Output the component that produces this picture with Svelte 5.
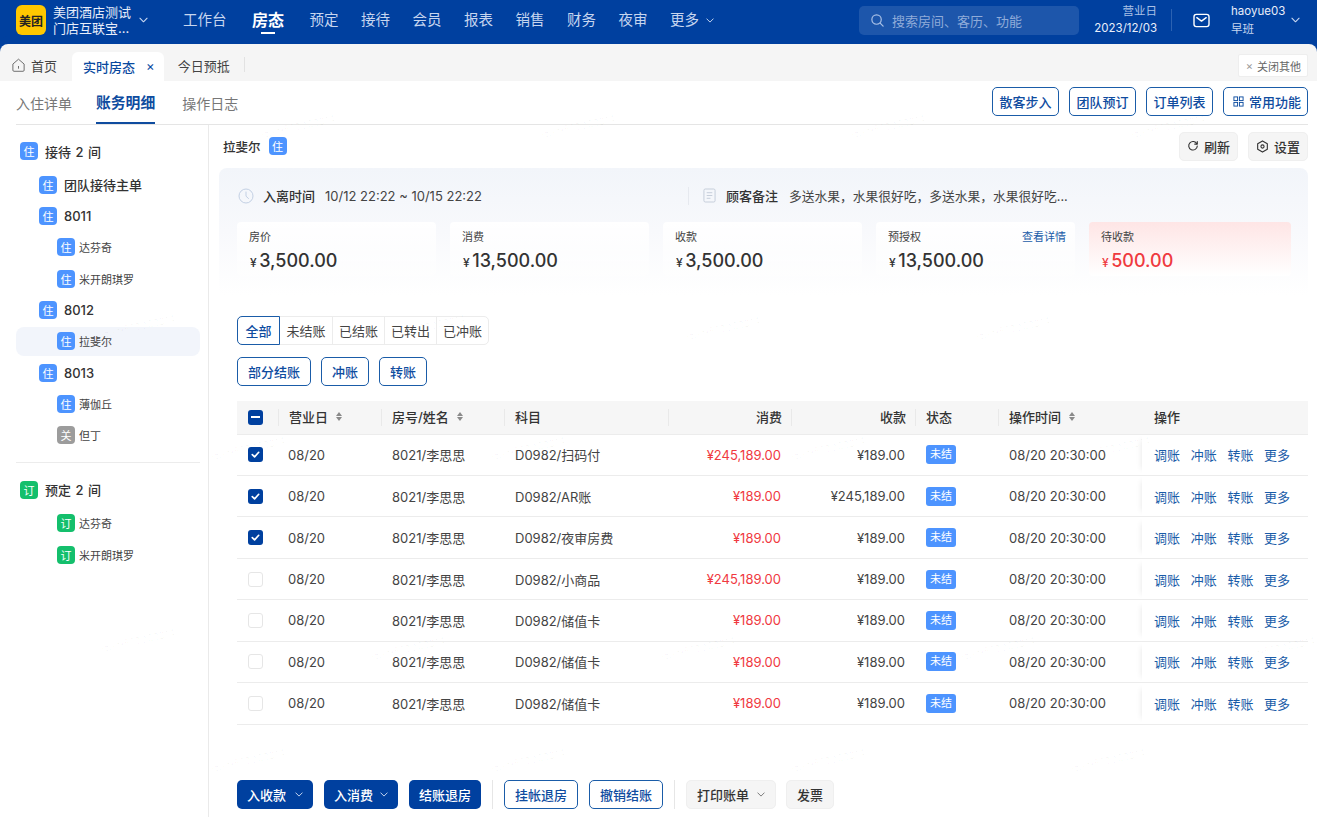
<script>
  const navItems = ["预定", "接待", "会员", "报表", "销售", "财务", "夜审"];

  const tree = [
    { tag: "住", label: "接待 2 间", level: 0, color: "blue", top: true },
    { tag: "住", label: "团队接待主单", level: 1, color: "blue" },
    { tag: "住", label: "8011", level: 1, color: "blue" },
    { tag: "住", label: "达芬奇", level: 2, color: "blue" },
    { tag: "住", label: "米开朗琪罗", level: 2, color: "blue" },
    { tag: "住", label: "8012", level: 1, color: "blue" },
    { tag: "住", label: "拉斐尔", level: 2, color: "blue", active: true },
    { tag: "住", label: "8013", level: 1, color: "blue" },
    { tag: "住", label: "薄伽丘", level: 2, color: "blue" },
    { tag: "关", label: "但丁", level: 2, color: "gray" }
  ];
  const tree2 = [
    { tag: "订", label: "预定 2 间", level: 0, color: "green", top: true },
    { tag: "订", label: "达芬奇", level: 2, color: "green" },
    { tag: "订", label: "米开朗琪罗", level: 2, color: "green" }
  ];

  const cards = [
    { label: "房价", value: "3,500.00" },
    { label: "消费", value: "13,500.00" },
    { label: "收款", value: "3,500.00" },
    { label: "预授权", value: "13,500.00", link: "查看详情" },
    { label: "待收款", value: "500.00", due: true }
  ];

  const filters = ["全部", "未结账", "已结账", "已转出", "已冲账"];

  const rows = [
    { checked: true, item: "扫码付", spend: "¥245,189.00", got: "¥189.00" },
    { checked: true, item: "AR账", spend: "¥189.00", got: "¥245,189.00" },
    { checked: true, item: "夜审房费", spend: "¥189.00", got: "¥189.00" },
    { checked: false, item: "小商品", spend: "¥245,189.00", got: "¥189.00" },
    { checked: false, item: "储值卡", spend: "¥189.00", got: "¥189.00" },
    { checked: false, item: "储值卡", spend: "¥189.00", got: "¥189.00" },
    { checked: false, item: "储值卡", spend: "¥189.00", got: "¥189.00" }
  ];

  // watermark stamps, their place on the page is the content
  const marks = [
    [260, 118], [540, 118], [850, 118], [1130, 118],
    [100, 318], [390, 318], [685, 320], [975, 320],
    [210, 440], [490, 440], [790, 440], [1075, 440],
    [100, 632], [370, 640], [660, 640], [960, 640], [1240, 640],
    [210, 752], [490, 752], [790, 752], [1070, 752]
  ];
</script>

<div class="page">
  <header class="topbar">
    <div class="logo">美团</div>
    <div class="store">
      <div>美团酒店测试</div>
      <div>门店互联宝...</div>
    </div>
    <svg class="chev store-chev" viewBox="0 0 10 6" width="9" height="6"><path d="M1 1l4 4 4-4" /></svg>

    <nav class="nav">
      <span class="nav-item">工作台</span>
      <span class="nav-item current">房态</span>
      {#each navItems as item}
        <span class="nav-item">{item}</span>
      {/each}
      <span class="nav-item">更多
        <svg class="chev" viewBox="0 0 10 6" width="8" height="5"><path d="M1 1l4 4 4-4" /></svg>
      </span>
    </nav>

    <div class="search">
      <svg viewBox="0 0 16 16" width="15" height="15" fill="none" stroke="#a9c0e6" stroke-width="1.3">
        <circle cx="7" cy="7" r="5" /><path d="M10.8 10.8L14 14" stroke-linecap="round" />
      </svg>
      <span>搜索房间、客历、功能</span>
    </div>

    <div class="bizdate">
      <div class="bizdate-label">营业日</div>
      <div>2023/12/03</div>
    </div>
    <div class="top-divider"></div>
    <svg class="mail" viewBox="0 0 18 16" width="17" height="15" fill="none" stroke="#fff" stroke-width="1.5">
      <rect x="1" y="1.5" width="16" height="13" rx="2.5" /><path d="M4 5l5 3.6L14 5" stroke-linecap="round" stroke-linejoin="round" />
    </svg>
    <div class="user">
      <div>haoyue03</div>
      <div class="shift">早班</div>
    </div>
    <svg class="chev user-chev" viewBox="0 0 10 6" width="9" height="6"><path d="M1 1l4 4 4-4" /></svg>
  </header>

  <div class="tabbar">
    <div class="tab home">
      <svg viewBox="0 0 16 16" width="15" height="16" fill="none" stroke="#666" stroke-width="1">
        <path d="M2 7l6-5.2L14 7v6.500a1.200 1.200 0 0 1-1.200 1.200H3.200A1.200 1.200 0 0 1 2 13.500z" stroke-linejoin="round" /><path d="M8 9.500v2" stroke-linecap="round" />
      </svg>
      首页
    </div>
    <div class="tab open">实时房态<span class="tab-x">×</span></div>
    <div class="tab next">今日预抵</div>
    <div class="tab-sep"></div>
    <div class="close-others"><span>×</span> 关闭其他</div>
  </div>

  <div class="subbar">
    <div class="subtabs">
      <span class="subtab">入住详单</span>
      <span class="subtab on">账务明细</span>
      <span class="subtab">操作日志</span>
    </div>
    <div class="subactions">
      <button class="btn line">散客步入</button>
      <button class="btn line">团队预订</button>
      <button class="btn line">订单列表</button>
      <button class="btn line">
        <svg viewBox="0 0 12 12" width="11" height="11" fill="none" stroke="#0a4a9f" stroke-width="1">
          <rect x="1" y="1" width="4" height="4" /><rect x="7" y="1" width="4" height="4" /><rect x="1" y="7" width="4" height="4" /><rect x="7" y="7" width="4" height="4" />
        </svg>
        常用功能
      </button>
    </div>
  </div>

  <div class="body">
    <aside class="side">
      {#each tree as node}
        <div class="node lv{node.level}" class:active={node.active} class:top={node.top}>
          <span class="tag {node.color}">{node.tag}</span>
          <span class="node-label">{node.label}</span>
        </div>
      {/each}
      <div class="side-rule"></div>
      {#each tree2 as node}
        <div class="node lv{node.level}" class:top={node.top}>
          <span class="tag {node.color}">{node.tag}</span>
          <span class="node-label">{node.label}</span>
        </div>
      {/each}
    </aside>

    <main class="content">
      <div class="guest-row">
        <div class="guest">拉斐尔 <span class="tag blue">住</span></div>
        <div class="guest-actions">
          <button class="btn gray">
            <svg viewBox="0 0 14 14" width="12" height="12" fill="none" stroke="#333" stroke-width="1.3">
              <path d="M11.5 4.5A5 5 0 1 0 12 7" stroke-linecap="round" /><path d="M12 1.8v3h-3" stroke-linejoin="round" stroke-linecap="round" />
            </svg>
            刷新
          </button>
          <button class="btn gray">
            <svg viewBox="0 0 14 14" width="13" height="13" fill="none" stroke="#333" stroke-width="1.2">
              <path d="M7 1l5.2 3v6L7 13l-5.2-3V4z" stroke-linejoin="round" /><circle cx="7" cy="7" r="1.7" />
            </svg>
            设置
          </button>
        </div>
      </div>

      <section class="summary">
        <div class="info">
          <div class="info-cell stay">
            <svg viewBox="0 0 16 16" width="16" height="16" fill="none" stroke="#c3d0e4" stroke-width="1">
              <circle cx="8" cy="8" r="7" /><path d="M8 4v4.2l2.5 2.3" stroke-linecap="round" />
            </svg>
            <b>入离时间</b>
            <span>10/12 22:22 ~ 10/15 22:22</span>
          </div>
          <div class="info-cell note">
            <svg viewBox="0 0 14 16" width="13" height="15" fill="none" stroke="#c3cbd8" stroke-width="1">
              <rect x="1" y="1" width="12" height="14" rx="1.5" /><path d="M4 5h6M4 8h6M4 11h4" />
            </svg>
            <b>顾客备注</b>
            <span class="note-text">多送水果，水果很好吃，多送水果，水果很好吃...</span>
          </div>
        </div>
        <div class="cards">
          {#each cards as card}
            <div class="card" class:due={card.due}>
              <div class="card-head">
                <span>{card.label}</span>
                {#if card.link}<span class="card-link">{card.link}</span>{/if}
              </div>
              <div class="amount"><small>¥</small>{card.value}</div>
            </div>
          {/each}
        </div>
      </section>

      <div class="tools">
        <div class="segments">
          {#each filters as f, i}
            <span class="segment" class:on={i === 0}>{f}</span>
          {/each}
        </div>
        <div class="bulk">
          <button class="btn line">部分结账</button>
          <button class="btn line">冲账</button>
          <button class="btn line">转账</button>
        </div>
      </div>

      <table>
        <colgroup>
          <col class="c1" /><col class="c2" /><col class="c3" /><col class="c4" />
          <col class="c3" /><col class="c6" /><col class="c7" /><col class="c8" /><col />
        </colgroup>
        <thead>
          <tr>
            <th class="cb"><span class="check mixed"><i></i></span></th>
            <th>营业日<span class="sort"><em></em><u></u></span></th>
            <th>房号/姓名<span class="sort"><em></em><u></u></span></th>
            <th>科目</th>
            <th class="num">消费</th>
            <th class="num">收款</th>
            <th>状态</th>
            <th>操作时间<span class="sort"><em></em><u></u></span></th>
            <th class="ops">操作</th>
          </tr>
        </thead>
        <tbody>
          {#each rows as row}
            <tr>
              <td class="cb">
                {#if row.checked}
                  <span class="check on">
                    <svg viewBox="0 0 12 12" width="11" height="11" fill="none" stroke="#fff" stroke-width="1.8"><path d="M2.5 6.2l2.5 2.4 4.5-5" stroke-linecap="round" stroke-linejoin="round" /></svg>
                  </span>
                {:else}
                  <span class="check"></span>
                {/if}
              </td>
              <td class="day">08/20</td>
              <td>8021/李思思</td>
              <td>D0982/{row.item}</td>
              <td class="num spend">{row.spend}</td>
              <td class="num got">{row.got}</td>
              <td><span class="status">未结</span></td>
              <td>08/20 20:30:00</td>
              <td class="ops links"><a href="#a">调账</a><a href="#a">冲账</a><a href="#a">转账</a><a href="#a">更多</a></td>
            </tr>
          {/each}
        </tbody>
      </table>

      <footer class="actions">
        <button class="btn solid">入收款 <svg class="chev" viewBox="0 0 10 6" width="8" height="5"><path d="M1 1l4 4 4-4" /></svg></button>
        <button class="btn solid tight">入消费 <svg class="chev" viewBox="0 0 10 6" width="8" height="5"><path d="M1 1l4 4 4-4" /></svg></button>
        <button class="btn solid">结账退房</button>
        <span class="foot-sep"></span>
        <button class="btn line">挂帐退房</button>
        <button class="btn line">撤销结账</button>
        <span class="foot-sep"></span>
        <button class="btn gray">打印账单 <svg class="chev dark" viewBox="0 0 10 6" width="8" height="5"><path d="M1 1l4 4 4-4" /></svg></button>
        <button class="btn gray invoice">发票</button>
      </footer>
    </main>
  </div>

  {#each marks as m}
    <span class="mark" style="left:{m[0]}px;top:{m[1]}px">张新符10020814</span>
  {/each}
</div>

<style>
  :global(body) {
    margin: 0;
    background: #fff;
  }
  .page {
    position: relative;
    width: 1317px;
    height: 817px;
    overflow: hidden;
    background: #fff;
    color: #333;
    font-family: Inter, "Noto Sans CJK SC", sans-serif;
    font-size: 13px;
  }
  button {
    font: inherit;
  }

  /* top bar */
  .topbar {
    display: flex;
    align-items: center;
    height: 44px;
    padding: 0 0 4px 16px;
    background: #00409f;
    color: #fff;
    box-sizing: border-box;
  }
  .logo {
    width: 30px;
    height: 30px;
    display: flex;
    align-items: center;
    justify-content: center;
    border-radius: 6px;
    background: #ffc800;
    color: #222;
    font-size: 12px;
    font-weight: 700;
    flex: none;
  }
  .store {
    margin-left: 7px;
    font-size: 13px;
    line-height: 16px;
    color: #e8eefa;
    white-space: nowrap;
  }
  .chev {
    fill: none;
    stroke: #c9d8f1;
    stroke-width: 1.2;
    stroke-linecap: round;
    stroke-linejoin: round;
  }
  .chev.dark {
    stroke: #777;
  }
  .store-chev {
    margin-left: 8px;
    flex: none;
  }
  .nav {
    display: flex;
    align-items: center;
    height: 40px;
    margin-left: 35px;
    padding-bottom: 3px;
    box-sizing: border-box;
    gap: 22.5px;
    width: 661px;
    flex: none;
  }
  .nav-item {
    position: relative;
    font-size: 14.5px;
    color: #c7d6ef;
    white-space: nowrap;
  }
  .nav-item .chev {
    margin-left: 3px;
    vertical-align: 2px;
  }
  .nav-item.current {
    margin: 0 3px;
    color: #fff;
    font-size: 16px;
    font-weight: 700;
  }
  .nav-item.current::after {
    content: "";
    position: absolute;
    left: 9px;
    right: 9px;
    bottom: -3px;
    height: 2px;
    background: #fff;
  }
  .search {
    display: flex;
    align-items: center;
    gap: 7px;
    width: 220px;
    height: 29px;
    margin-left: 15px;
    padding-left: 11px;
    box-sizing: border-box;
    border-radius: 5px;
    background: #1d56ab;
    color: #8fabd9;
    font-size: 13px;
    flex: none;
  }
  .bizdate {
    width: 78px;
    text-align: right;
    font-size: 11.5px;
    line-height: 17px;
    color: #e8eefa;
    flex: none;
  }
  .bizdate-label {
    color: #a9c0e6;
  }
  .top-divider {
    width: 1px;
    height: 22px;
    margin-left: 14px;
    background: #2c62b2;
    flex: none;
  }
  .mail {
    margin-left: 21px;
    flex: none;
  }
  .user {
    margin-left: 21px;
    font-size: 11.5px;
    line-height: 18px;
    color: #e8eefa;
    flex: none;
  }
  .shift {
    color: #c7d6ef;
  }
  .user-chev {
    margin-left: 6px;
    flex: none;
  }

  /* page tabs */
  .tabbar {
    display: flex;
    align-items: flex-end;
    height: 37px;
    background: #f5f5f5;
    border-radius: 8px 8px 0 0;
    box-shadow: 0 -8px 0 #00409f;
    font-size: 13px;
  }
  .tab {
    display: flex;
    align-items: center;
    height: 30px;
    color: #444;
    white-space: nowrap;
  }
  .tab.home {
    gap: 5px;
    padding: 0 15px 0 11px;
    margin-bottom: 1px;
  }
  .tab.open {
    height: 29px;
    padding: 0 9px 0 11px;
    background: #fff;
    border-radius: 6px 6px 0 0;
    color: #0a4a9f;
    font-weight: 500;
    gap: 11px;
  }
  .tab-x {
    font-size: 13px;
    line-height: 1;
    font-weight: 400;
  }
  .tab.next {
    margin: 0 14px 1px 14px;
  }
  .tab-sep {
    width: 1px;
    height: 15px;
    margin: 0 0 9px 0;
    background: #e2e2e2;
  }
  .close-others {
    display: flex;
    align-items: center;
    gap: 4px;
    height: 21px;
    padding: 0 6px 0 7px;
    margin: 0 9px 4px auto;
    background: #fff;
    border: 1px solid #eee;
    border-radius: 2px;
    color: #666;
    font-size: 11px;
  }
  .close-others span {
    color: #999;
  }

  .subbar {
    display: flex;
    align-items: center;
    justify-content: space-between;
    height: 44px;
    margin: 0 9px 0 16px;
    box-sizing: border-box;
    border-bottom: 1px solid #e5e5e5;
  }
  .subtabs {
    display: flex;
    gap: 24px;
    height: 100%;
  }
  .subtab {
    display: flex;
    align-items: center;
    height: 43px;
    font-size: 14px;
    color: #777;
    box-sizing: border-box;
  }
  .subtab.on {
    margin-right: 3px;
    color: #0f4c9f;
    font-size: 14.8px;
    font-weight: 700;
    border-bottom: 2px solid #0f4c9f;
  }
  .subactions {
    display: flex;
    gap: 10px;
    margin-bottom: 2px;
  }
  .subactions .btn {
    padding: 0 6.5px;
  }
  .subactions .btn:last-child {
    padding: 0 6px 0 9px;
  }

  /* buttons */
  .btn {
    display: inline-flex;
    align-items: center;
    justify-content: center;
    gap: 5px;
    height: 29px;
    padding: 0 10px;
    border-radius: 5px;
    box-sizing: border-box;
    font-size: 13px;
    font-weight: 500;
    white-space: nowrap;
  }
  .btn.line {
    border: 1px solid #1a5ca8;
    background: #fff;
    color: #0f4c9f;
  }
  .btn.gray {
    border: 1px solid #efefef;
    background: #f5f5f5;
    color: #333;
  }
  .btn.solid {
    border: 0;
    background: #00409f;
    color: #fff;
  }

  /* body */
  .body {
    display: flex;
    height: 692px;
  }
  .side {
    width: 209px;
    flex: none;
    box-sizing: border-box;
    padding: 10px 8px 0 16px;
    border-right: 1px solid #eaeaea;
  }
  .node {
    display: flex;
    align-items: center;
    height: 29px;
    margin-bottom: 2.3px;
    border-radius: 8px;
    font-size: 13px;
    font-weight: 500;
    color: #333;
  }
  .node.top {
    height: 32px;
    margin-bottom: 3.3px;
    word-spacing: 1px;
  }
  .node.lv0 {
    padding-left: 4px;
  }
  .node.lv1 {
    padding-left: 23px;
  }
  .node.lv2 {
    padding-left: 41px;
    font-size: 11px;
    font-weight: 400;
    color: #444;
  }
  .node.active {
    background: #f2f5fb;
  }
  .node-label {
    margin-left: 4px;
  }
  .lv0 .node-label,
  .lv1 .node-label {
    margin-left: 7px;
  }
  .tag {
    display: inline-flex;
    align-items: center;
    justify-content: center;
    width: 18px;
    height: 18px;
    border-radius: 4px;
    color: #fff;
    font-size: 11px;
    font-weight: 400;
    flex: none;
  }
  .tag.blue {
    background: #4d94ff;
  }
  .tag.gray {
    background: #9c9c9c;
  }
  .tag.green {
    background: #14bf6c;
  }
  .side-rule {
    height: 1px;
    margin: 12px 0 11px;
    background: #ececec;
  }

  .content {
    flex: 1;
    min-width: 0;
    padding: 0 9px 0 10px;
    box-sizing: border-box;
  }
  .guest-row {
    display: flex;
    align-items: center;
    justify-content: space-between;
    height: 43px;
    padding: 0 0 1px 4px;
    box-sizing: border-box;
  }
  .guest {
    display: flex;
    align-items: center;
    gap: 8px;
    font-size: 12.5px;
    font-weight: 500;
  }
  .guest-actions {
    display: flex;
    gap: 10px;
  }
  .guest-actions .btn {
    padding: 0 7px;
  }
  .summary {
    height: 127px;
    box-sizing: border-box;
    padding: 0 18px;
    border-radius: 8px 8px 0 0;
    background: linear-gradient(#f2f5fa, #f8f9fc 50%, #fff);
  }
  .info {
    display: flex;
    align-items: center;
    height: 55px;
    margin-bottom: -1px;
    font-size: 13px;
    color: #444;
  }
  .info-cell {
    display: flex;
    align-items: center;
  }
  .info-cell b {
    font-weight: 500;
    color: #333;
  }
  .info-cell.stay {
    width: 451px;
    padding-left: 1px;
    box-sizing: border-box;
  }
  .stay b {
    margin: 0 10px 0 9px;
  }
  .note {
    padding-left: 14px;
    border-left: 1px solid #e6e9ef;
    height: 18px;
  }
  .note b {
    margin: 0 11px 0 10px;
  }
  .note-text {
    font-size: 12.75px;
  }
  .cards {
    display: grid;
    grid-template-columns: repeat(4, 199px) 202px;
    gap: 0 14px;
  }
  .card {
    height: 54px;
    padding: 8px 12px 0;
    box-sizing: border-box;
    border-radius: 4px;
    background: linear-gradient(#fff, rgba(255, 255, 255, 0.3));
  }
  .card.due {
    background: linear-gradient(#fee5e5, #fff);
  }
  .card-head {
    display: flex;
    justify-content: space-between;
    font-size: 11px;
    line-height: 14px;
    color: #444;
  }
  .card:nth-child(4) .card-head {
    margin-right: -3px;
  }
  .card-link {
    color: #1a5ca8;
  }
  .amount {
    margin-top: 5px;
    padding-left: 1px;
    font-size: 18px;
    line-height: 24px;
    font-weight: 500;
    color: #333;
  }
  .amount small {
    margin-right: 2.5px;
    font-size: 12px;
  }
  .due .amount {
    color: #ef3a3f;
  }

  .tools {
    margin: 21px 0 0 18px;
  }
  .segments {
    display: inline-flex;
    height: 29px;
    border: 1px solid #ececec;
    border-radius: 5px;
    box-sizing: border-box;
    vertical-align: top;
  }
  .segment {
    display: flex;
    align-items: center;
    justify-content: center;
    width: 52px;
    box-sizing: border-box;
    border-left: 1px solid #ececec;
    font-size: 13px;
    color: #444;
  }
  .segment.on {
    width: 43px;
    margin: -1px 0 -1px -1px;
    border: 1px solid #1a5ca8;
    border-radius: 5px 0 0 5px;
    color: #0f4c9f;
    font-weight: 500;
  }
  .segment.on + .segment {
    border-left: 0;
  }
  .bulk {
    display: flex;
    gap: 10px;
    margin-top: 12px;
  }

  /* table */
  table {
    width: 1071px;
    margin: 15px 0 0 18px;
    border-collapse: collapse;
    table-layout: fixed;
  }
  .c1 { width: 42px; }
  .c2 { width: 103px; }
  .c3 { width: 123px; }
  .c4 { width: 164px; }
  .c6 { width: 124px; }
  .c7 { width: 83px; }
  .c8 { width: 143px; }
  th {
    position: relative;
    height: 33px;
    padding: 0 10px 2px;
    background: #f6f6f6;
    border-bottom: 1px solid #ececec;
    text-align: left;
    font-size: 13px;
    font-weight: 500;
    color: #333;
    box-sizing: border-box;
  }
  th:not(:last-child):not(:nth-child(8))::after {
    content: "";
    position: absolute;
    right: 0;
    top: 8px;
    height: 17px;
    width: 1px;
    background: #e9e9e9;
  }
  td {
    height: 41.45px;
    padding: 0 10px;
    border-bottom: 1px solid #ececec;
    font-size: 13px;
    color: #444;
    white-space: nowrap;
    box-sizing: border-box;
  }
  .day {
    padding-left: 9px;
  }
  .cb {
    padding: 0 0 0 11px;
  }
  .num {
    text-align: right;
  }
  .spend {
    padding-right: 11px;
    color: #f0393f;
  }
  .got {
    padding-right: 11px;
  }
  .ops {
    padding-left: 12px;
    box-shadow: -6px 0 6px -6px rgba(0, 0, 0, 0.1);
  }
  .links a {
    margin-right: 10.7px;
    color: #1a5ca8;
    text-decoration: none;
  }
  .check {
    display: flex;
    align-items: center;
    justify-content: center;
    width: 15px;
    height: 15px;
    border: 1px solid #e6e6e6;
    border-radius: 3px;
    background: #fff;
    box-sizing: border-box;
  }
  .check.on,
  .check.mixed {
    border: 0;
    background: #00409f;
  }
  .check.mixed i {
    display: block;
    width: 9px;
    height: 2px;
    background: #fff;
  }
  .sort {
    display: inline-flex;
    flex-direction: column;
    gap: 1px;
    margin-left: 8px;
    vertical-align: middle;
    position: relative;
    top: -2px;
  }
  .sort em,
  .sort u {
    display: block;
    width: 0;
    height: 0;
    border-left: 3px solid transparent;
    border-right: 3px solid transparent;
  }
  .sort em {
    border-bottom: 4px solid #8a8a8a;
  }
  .sort u {
    border-top: 4px solid #8a8a8a;
  }
  .status {
    display: inline-block;
    width: 30px;
    height: 19px;
    line-height: 19px;
    text-align: center;
    vertical-align: middle;
    border-radius: 3px;
    background: #4d94ff;
    color: #fff;
    font-size: 11px;
  }

  /* footer actions */
  .actions {
    display: flex;
    align-items: center;
    gap: 11px;
    margin: 55px 0 0 18px;
  }
  .actions .solid .chev {
    margin-left: 4px;
  }
  .actions .tight .chev {
    margin-left: 2px;
  }
  .actions .gray .chev {
    margin-left: 3px;
  }
  .invoice {
    margin-left: -1px;
  }
  .foot-sep {
    width: 1px;
    height: 29px;
    background: #e6e6e6;
  }

  .mark {
    position: absolute;
    transform: rotate(-12deg);
    font-size: 10px;
    color: rgba(0, 0, 0, 0.035);
    white-space: nowrap;
    pointer-events: none;
  }
</style>
